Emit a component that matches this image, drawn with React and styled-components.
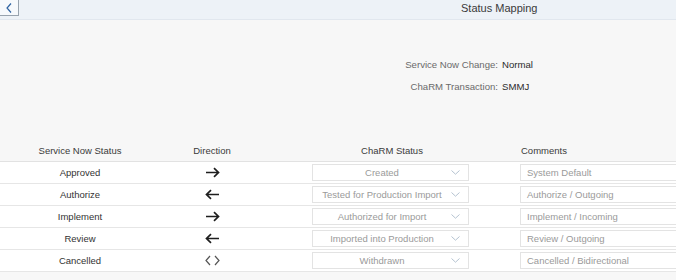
import styled, { createGlobalStyle } from "styled-components";

const GlobalStyle = createGlobalStyle`
    html, body {
        margin:0px;
        padding:0px;
        background-color:#f7f7f7;
        font-family:"Liberation Sans", Arial, sans-serif;
        overflow:hidden;
    }
`

const mappings = [
    { snow: "Approved", dir: "right", charm: "Created", comment: "System Default" },
    { snow: "Authorize", dir: "left", charm: "Tested for Production Import", comment: "Authorize / Outgoing" },
    { snow: "Implement", dir: "right", charm: "Authorized for Import", comment: "Implement / Incoming" },
    { snow: "Review", dir: "left", charm: "Imported into Production", comment: "Review / Outgoing" },
    { snow: "Cancelled", dir: "both", charm: "Withdrawn", comment: "Cancelled / Bidirectional" },
];

function DirectionIcon({ dir }) {
    if (dir === "both") {
        return (
            <svg width="15" height="11" viewBox="0 0 15 11">
                <path d="M5 1 L1 5.5 L5 10 M10 1 L14 5.5 L10 10" fill="none" stroke="#555" strokeWidth="1.2" />
            </svg>
        );
    }
    const d = dir === "right"
        ? "M1 5.5 H13.5 M9 1.2 L13.5 5.5 L9 9.8"
        : "M14 5.5 H1.5 M6 1.2 L1.5 5.5 L6 9.8";
    return (
        <svg width="15" height="11" viewBox="0 0 15 11">
            <path d={d} fill="none" stroke="#1e1e1e" strokeWidth="1.7" />
        </svg>
    );
}

export default function App() {
    return (
        <>
            <GlobalStyle />
            <TopBar>
                <BackButton>
                    <svg width="6" height="10" viewBox="0 0 6 10">
                        <path d="M5 0.5 L1 5 L5 9.5" fill="none" stroke="#2e63a2" strokeWidth="1.2" />
                    </svg>
                </BackButton>
                <Title>Status Mapping</Title>
            </TopBar>

            <Info>
                <InfoLabel>Service Now Change:</InfoLabel>
                <InfoValue>Normal</InfoValue>
                <InfoLabel>ChaRM Transaction:</InfoLabel>
                <InfoValue>SMMJ</InfoValue>
            </Info>

            <Table>
                <HeaderRow>
                    <HeadCell>Service Now Status</HeadCell>
                    <HeadCell>Direction</HeadCell>
                    <HeadCell>ChaRM Status</HeadCell>
                    <HeadCell align="left">Comments</HeadCell>
                </HeaderRow>
                {mappings.map((m) => (
                    <Row key={m.snow}>
                        <Cell>{m.snow}</Cell>
                        <Cell><DirectionIcon dir={m.dir} /></Cell>
                        <Cell>
                            <Select>
                                <span>{m.charm}</span>
                                <svg width="9" height="5" viewBox="0 0 9 5">
                                    <path d="M0.5 0.5 L4.5 4.2 L8.5 0.5" fill="none" stroke="#b5c3d1" strokeWidth="1" />
                                </svg>
                            </Select>
                        </Cell>
                        <Cell align="left">
                            <Input>{m.comment}</Input>
                        </Cell>
                    </Row>
                ))}
            </Table>
        </>
    );
};

const TopBar = styled.div`
    display:flex;
    align-items:flex-start;
    height:19px;
    background-color:#edf2f7;
    border-bottom:1px solid #e1e7ee;
`

const BackButton = styled.div`
    box-sizing:border-box;
    width:19px;
    height:16px;
    display:flex;
    align-items:center;
    justify-content:center;
    background-color:#f6f9fc;
    border:1px solid #98a3ae;
    border-top:none;
    border-left:none;
`

const Title = styled.div`
    margin-left:442px;
    line-height:17px;
    font-size:11px;
    color:#3a3a3a;
`

const Info = styled.div`
    display:grid;
    grid-template-columns:498px auto;
    column-gap:4px;
    grid-auto-rows:22px;
    align-items:center;
    padding:33px 0px 43px 0px;
    font-size:9.6px;
`

const InfoLabel = styled.div`
    text-align:right;
    color:#6a6a6a;
`

const InfoValue = styled.div`
    color:#2b2b2b;
`

const Table = styled.div`
    font-size:9.5px;
    color:#333;
`

const columns = `160px 104px 256px 1fr`;

const HeaderRow = styled.div`
    display:grid;
    grid-template-columns:${columns};
    height:21px;
    align-items:center;
    border-bottom:1px solid #e2e2e2;
    color:#3a3a3a;
`

const HeadCell = styled.div`
    display:flex;
    justify-content:${(p) => (p.align === "left" ? "flex-start" : "center")};
    padding-left:${(p) => (p.align === "left" ? "1px" : "0px")};
`

const Row = styled.div`
    display:grid;
    grid-template-columns:${columns};
    height:21px;
    align-items:center;
    background-color:#ffffff;
    border-bottom:1px solid #e6e6e6;
`

const Cell = styled.div`
    display:flex;
    align-items:center;
    justify-content:${(p) => (p.align === "left" ? "flex-start" : "center")};
    min-width:0px;
    &:nth-child(3){
        justify-content:flex-start;
        padding-left:48px;
    }
`

const Select = styled.div`
    box-sizing:border-box;
    width:157px;
    height:17px;
    display:flex;
    align-items:center;
    border:1px solid #e3e3e3;
    color:#9a9a9a;
    padding-right:8px;

    span{
        flex:1;
        text-align:center;
        white-space:nowrap;
    }
`

const Input = styled.div`
    box-sizing:border-box;
    width:100%;
    height:17px;
    display:flex;
    align-items:center;
    border:1px solid #e3e3e3;
    border-right:none;
    padding-left:6px;
    color:#9a9a9a;
    white-space:nowrap;
`
